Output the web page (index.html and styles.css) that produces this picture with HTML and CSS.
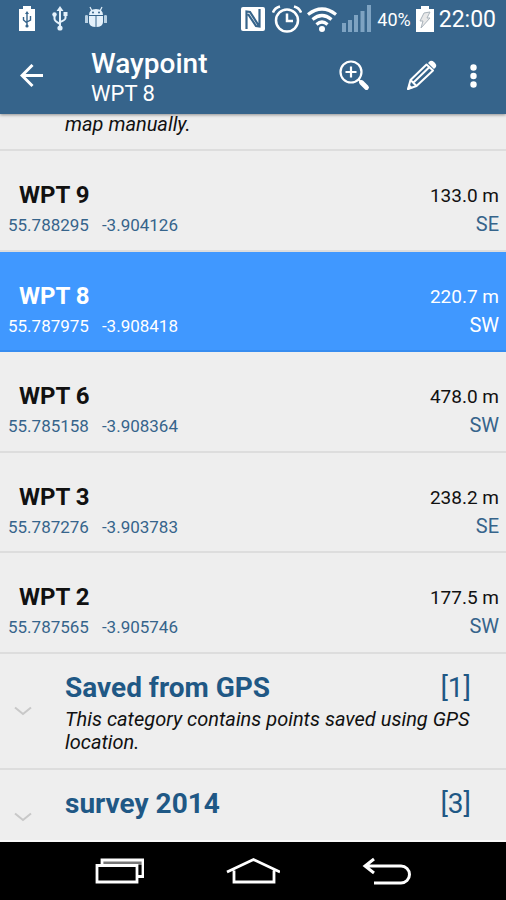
FILE: index.html
```html
<!DOCTYPE html>
<html lang="en">
<head>
<meta charset="utf-8">
<meta name="viewport" content="width=device-width, initial-scale=1">
<title>Waypoint</title>
<link rel="stylesheet" href="styles.css">
</head>
<body>
<header class="top">
  <div class="status">
    <div class="status-left">
      <svg width="18" height="26" viewBox="0 0 18 26"><path fill="#fff" d="M5 0h8v3h4v22H1V3h4z"/><path fill="none" stroke="#36648b" stroke-width="1.4" d="M9 7v13M5.500 11v3L9 17M12.500 10v4L9 16"/><path fill="#36648b" d="M9 5l2 3H7z"/><circle cx="9" cy="20" r="1.600" fill="#36648b"/></svg>
      <svg width="16" height="26" viewBox="0 0 16 26"><path fill="none" stroke="#e4f1fb" stroke-width="2" d="M8 4v18M2.500 9v4q0 2 5.500 5M13.500 8v4q0 2-5.500 4"/><path fill="#e4f1fb" d="M8 0l3.500 5h-7zM11.500 6h4v4h-4z"/><circle cx="2.500" cy="8.500" r="2.200" fill="#e4f1fb"/><circle cx="8" cy="22" r="2.600" fill="#e4f1fb"/></svg>
      <svg width="24" height="26" viewBox="0 0 24 26"><path fill="#e4f1fb" d="M5 9q0-6 7-6t7 6zM5 10h14v6q0 5-7 5t-7-5z"/><path fill="#b9d0e2" d="M1 10q0-1 1.500-1t1.500 1v7H1zM20 10q0-1 1.500-1t1.500 1v7h-3z"/><path stroke="#e4f1fb" stroke-width="1.200" d="M6 1l2 4M18 1l-2 4"/><path stroke="#36648b" d="M12 10v11M5 9.500h14"/><circle cx="9" cy="6.500" r="1" fill="#36648b"/><circle cx="15" cy="6.500" r="1" fill="#36648b"/></svg>
    </div>
    <div class="status-right">
      <svg width="26" height="28" viewBox="0 0 26 28"><rect x="0" y="2" width="24" height="24" rx="2" fill="#fff"/><path fill="none" stroke="#36648b" stroke-width="2.200" d="M5.500 24V6.500L9 7l9 14M18.500 4v17.500L15 21 7 9"/></svg>
      <svg width="30" height="28" viewBox="0 0 30 28"><g fill="none" stroke="#fff" stroke-width="2.500"><circle cx="15" cy="15.500" r="11"/><path d="M15 8.500V16h6M1 7.500q1.500-4.500 7-6M29 7.500q-1.500-4.500-7-6"/></g></svg>
      <svg width="30" height="28" viewBox="0 0 30 28"><g fill="none" stroke="#fff" stroke-width="3.200"><path d="M1 9.500q14-11 28 0M5.500 14.500q9.500-8 19 0M9.500 19.500q5.500-5 11 0"/></g><circle cx="15" cy="24" r="3" fill="#fff"/></svg>
      <svg width="30" height="28" viewBox="0 0 30 28"><path fill="#7ea3c2" d="M0 18h4v9H0zM6 15h4v12H6zM12 10h4v17h-4zM18.500 6h4v21h-4zM25 0h4v27h-4z"/></svg>
      <span class="percent">40%</span>
      <svg width="18" height="28" viewBox="0 0 18 28"><path fill="#fff" d="M5 1h8v3h5v23H0V4h5z"/><path fill="#e8e8e8" stroke="#a9b3bb" d="M8 8l6-1-3 6h3L5 23l2-7H4z"/></svg>
      <span class="clock">22:00</span>
    </div>
  </div>
  <div class="appbar">
    <button class="icon back" aria-label="Back"><svg width="24" height="24" viewBox="0 0 24 24"><path fill="none" stroke="#fff" stroke-width="3" d="M23 11.500H2.500M12.500 1L2 11.500 12.500 22"/></svg></button>
    <div class="titles">
      <h1>Waypoint</h1>
      <p>WPT 8</p>
    </div>
    <div class="actions">
      <button class="icon" aria-label="Zoom in"><svg width="32" height="32" viewBox="0 0 32 32"><g fill="none" stroke="#fff"><circle cx="13" cy="12" r="10.500" stroke-width="2.200"/><path stroke-width="2.200" d="M13 6.500v11M7.500 12h11"/><path stroke-width="2" d="M20 19l3 3"/><path stroke-width="4.800" stroke-linecap="round" d="M23.500 22.500l5 5"/></g></svg></button>
      <button class="icon" aria-label="Edit"><svg width="32" height="32" viewBox="0 0 32 32"><g fill="none" stroke="#fff" stroke-width="2" stroke-linejoin="round"><path d="M2 29l2.500-9L20.500 4.500l6.500 6L10.500 26zM4.500 20l6 6M7.500 22.500L23.500 7"/></g><path fill="#fff" d="M1 30l2-6 4 4zM22 3l2-2q2-1 4 1l1 1q2 2 1 4l-2 2z"/></svg></button>
      <button class="icon more" aria-label="More options"><svg width="8" height="24" viewBox="0 0 8 24"><g fill="#fff"><circle cx="3.500" cy="3.500" r="3.200"/><circle cx="3.500" cy="12" r="3.200"/><circle cx="3.500" cy="20.500" r="3.200"/></g></svg></button>
    </div>
  </div>
</header>
<main class="list">
  <div class="partial"><p class="note">map manually.</p></div>
  <a class="point" href="#wpt9"><span class="main"><b>WPT 9</b><span class="coords"><span>55.788295</span><span>-3.904126</span></span></span><span class="range"><span>133.0 m</span><span class="dir">SE</span></span></a>
  <a class="point selected" href="#wpt8" aria-current="true"><span class="main"><b>WPT 8</b><span class="coords"><span>55.787975</span><span>-3.908418</span></span></span><span class="range"><span>220.7 m</span><span class="dir">SW</span></span></a>
  <a class="point" href="#wpt6"><span class="main"><b>WPT 6</b><span class="coords"><span>55.785158</span><span>-3.908364</span></span></span><span class="range"><span>478.0 m</span><span class="dir">SW</span></span></a>
  <a class="point" href="#wpt3"><span class="main"><b>WPT 3</b><span class="coords"><span>55.787276</span><span>-3.903783</span></span></span><span class="range"><span>238.2 m</span><span class="dir">SE</span></span></a>
  <a class="point" href="#wpt2"><span class="main"><b>WPT 2</b><span class="coords"><span>55.787565</span><span>-3.905746</span></span></span><span class="range"><span>177.5 m</span><span class="dir">SW</span></span></a>
  <section class="category">
    <button class="expand" aria-label="Expand Saved from GPS"><svg width="18" height="10" viewBox="0 0 18 10"><path fill="none" stroke="#c8c8c8" stroke-width="2" d="M1 1.500l8 6.500 8-6.500"/></svg></button>
    <div class="category-body">
      <div class="category-head"><h2>Saved from GPS</h2><span class="count">[1]</span></div>
      <p class="note">This category contains points saved using GPS location.</p>
    </div>
  </section>
  <section class="category last">
    <button class="expand" aria-label="Expand survey 2014"><svg width="18" height="10" viewBox="0 0 18 10"><path fill="none" stroke="#c8c8c8" stroke-width="2" d="M1 1.500l8 6.500 8-6.500"/></svg></button>
    <div class="category-body">
      <div class="category-head"><h2>survey 2014</h2><span class="count">[3]</span></div>
    </div>
  </section>
</main>
<nav class="navbar">
  <button class="icon" aria-label="Recent apps"><svg width="50" height="28" viewBox="0 0 50 28"><path fill="#777" d="M8 4h40v4H8z"/><g fill="none" stroke="#fff" stroke-width="2.800"><path d="M8 8V3h41v16.500h-7M3 8.500h40V25H3z"/></g></svg></button>
  <button class="icon" aria-label="Home"><svg width="54" height="28" viewBox="0 0 54 28"><path fill="none" stroke="#fff" stroke-width="2.800" d="M1 15L27.500 2.500 54 15M8 13.500V25h40V13.500"/></svg></button>
  <button class="icon" aria-label="Back"><svg width="50" height="28" viewBox="0 0 50 28"><path fill="none" stroke="#fff" stroke-width="3" d="M3 9h36a8.500 8.500 0 0 1 0 17H12M12 2L3 9l9 7"/></svg></button>
</nav>
</body>
</html>
```
FILE: styles.css
```css
* { box-sizing: border-box; }

body {
  margin: 0;
  min-height: 100vh;
  display: flex;
  flex-direction: column;
  background: #eee;
  color: #111;
  font-family: Roboto, "Liberation Sans", sans-serif;
}

h1, h2, p { margin: 0; }
svg { display: block; flex: none; }
button { border: 0; padding: 0; background: none; color: inherit; font: inherit; cursor: pointer; }

.top {
  position: relative;
  background: #36648b;
  color: #fff;
  box-shadow: 0 1px 3px rgba(0, 0, 0, 0.4);
}

.status {
  height: 38px;
  padding: 0 10px 0 18px;
  display: flex;
  align-items: center;
  justify-content: space-between;
}
.status-left { display: flex; align-items: center; gap: 16px; }
.status-right { display: flex; align-items: center; gap: 5px; }
.percent { font-size: 18px; }
.clock { font-size: 23px; }

.appbar {
  height: 76px;
  padding: 0 28px 0 20px;
  display: flex;
  align-items: center;
}
.titles { flex: 1; padding: 4px 0 0 47px; }
.titles h1 { font-size: 28px; font-weight: 500; line-height: 32px; }
.titles p { font-size: 22px; line-height: 28px; }
.actions { display: flex; align-items: center; gap: 36px; }
.more { margin-left: -4px; }

.list { flex: 1; display: flex; flex-direction: column; }

.note { font-size: 20px; line-height: 23px; font-style: italic; color: #111; }
.partial {
  height: 37px;
  padding-left: 65px;
  border-bottom: 2px solid #ddd;
}
.partial .note { line-height: 20px; }

.point {
  flex: 1;
  padding: 27px 7px 0 8px;
  display: flex;
  justify-content: space-between;
  border-bottom: 2px solid #ddd;
  color: inherit;
  text-decoration: none;
}
.main { display: flex; flex-direction: column; }
.main b { padding-left: 11px; font-size: 24px; font-weight: 700; line-height: 34px; }
.coords { display: flex; gap: 13px; font-size: 17px; line-height: 26px; color: #36648b; }
.range {
  padding-top: 4px;
  display: flex;
  flex-direction: column;
  align-items: flex-end;
  font-size: 20px;
  line-height: 28px;
}
.range span:first-child { font-size: 19px; }
.dir { color: #36648b; }
.selected { background: #4098ff; border-color: #368cf0; color: #fff; }
.selected .coords, .selected .dir { color: #fff; }

.category {
  height: 116px;
  display: flex;
  align-items: center;
  border-bottom: 2px solid #ddd;
}
.expand { width: 65px; padding-left: 14px; }
.category-body { flex: 1; padding-right: 35px; align-self: flex-start; }
.category-head {
  padding: 16px 0 2px;
  display: flex;
  justify-content: space-between;
  font-size: 28px;
  line-height: 36px;
  color: #1f5885;
}
.category-head h2 { font-size: 28px; font-weight: 700; }
.last { height: 72px; border-bottom-color: #fafafa; }
.last .expand { padding-top: 24px; }

.navbar {
  height: 58px;
  padding: 0 94px;
  display: flex;
  align-items: center;
  justify-content: space-between;
  background: #000;
}
```
